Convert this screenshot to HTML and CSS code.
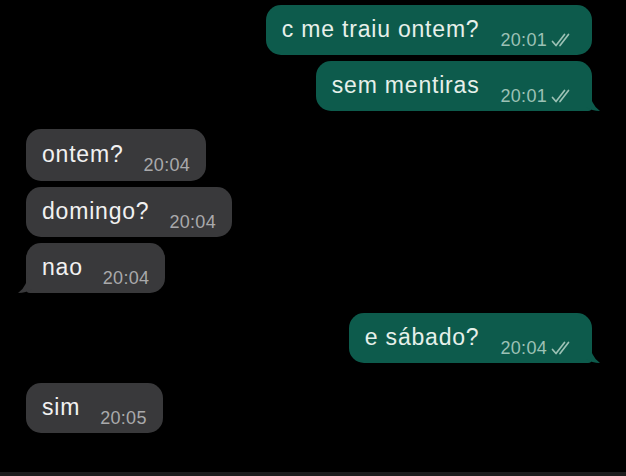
FILE: index.html
```html
<!DOCTYPE html>
<html lang="pt">
<head>
<meta charset="utf-8">
<title>conversa</title>
<link rel="stylesheet" href="styles.css">
</head>
<body>
<div class="chat">
	<div class="row out first">
		<div class="bubble green">
			<span class="text">c me traiu ontem?</span>
			<span class="time">20:01 <svg class="checks" viewBox="0 0 22 14"><path d="M1.5 8.5 L5 12.5 L13.5 1.5"/><path d="M9 12.5 L17.5 1.5"/></svg></span>
		</div>
	</div>
	<div class="row out">
		<div class="bubble green tail-right">
			<span class="text">sem mentiras</span>
			<span class="time">20:01 <svg class="checks" viewBox="0 0 22 14"><path d="M1.5 8.5 L5 12.5 L13.5 1.5"/><path d="M9 12.5 L17.5 1.5"/></svg></span>
			<svg class="tail tr" viewBox="0 0 16 22"><path d="M0 0 L4 0 Q4 14 14 21 Q6 21 0 17 Z"/></svg>
		</div>
	</div>
	<div class="row in gap-big">
		<div class="bubble gray tall">
			<span class="text">ontem?</span>
			<span class="time">20:04</span>
		</div>
	</div>
	<div class="row in">
		<div class="bubble gray">
			<span class="text">domingo?</span>
			<span class="time">20:04</span>
		</div>
	</div>
	<div class="row in">
		<div class="bubble gray tail-left">
			<span class="text">nao</span>
			<span class="time">20:04</span>
			<svg class="tail tl" viewBox="0 0 16 22"><path d="M16 0 L12 0 Q12 14 2 21 Q10 21 16 17 Z"/></svg>
		</div>
	</div>
	<div class="row out gap-big2">
		<div class="bubble green tail-right">
			<span class="text">e sábado?</span>
			<span class="time">20:04 <svg class="checks" viewBox="0 0 22 14"><path d="M1.5 8.5 L5 12.5 L13.5 1.5"/><path d="M9 12.5 L17.5 1.5"/></svg></span>
			<svg class="tail tr" viewBox="0 0 16 22"><path d="M0 0 L4 0 Q4 14 14 21 Q6 21 0 17 Z"/></svg>
		</div>
	</div>
	<div class="row in gap-big2">
		<div class="bubble gray">
			<span class="text">sim</span>
			<span class="time">20:05</span>
		</div>
	</div>
</div>
<div class="bottombar"></div>
</body>
</html>
```

FILE: styles.css
```css
html, body {
	margin: 0;
	padding: 0;
	background: #000;
	width: 626px;
	height: 476px;
	overflow: hidden;
	font-family: "Liberation Sans", Arial, sans-serif;
}
.chat {
	height: 472px;
	display: flex;
	flex-direction: column;
	padding-top: 5px;
	box-sizing: border-box;
}
.row {
	display: flex;
	margin-top: 6px;
}
.row.first { margin-top: 0; }
.row.out {
	justify-content: flex-end;
	padding-right: 34px;
}
.row.in {
	justify-content: flex-start;
	padding-left: 26px;
}
.row.gap-big { margin-top: 18px; }
.row.gap-big2 { margin-top: 20px; }

.bubble {
	position: relative;
	display: flex;
	align-items: flex-start;
	height: 50px;
	box-sizing: border-box;
	border-radius: 15px;
	padding: 11px 16px 0 16px;
}
.bubble.tall { height: 52px; padding-top: 12px; }
.green {
	background: #0d5b4c;
	color: #e6f0ea;
	padding-right: 19px;
}
.gray {
	background: #39393b;
	color: #f1f1f1;
}
.text {
	font-size: 23px;
	line-height: 27px;
	letter-spacing: 0.8px;
}
.time {
	display: flex;
	align-items: center;
	gap: 4px;
	margin-left: 20px;
	margin-top: 14px;
	font-size: 18px;
	line-height: 20px;
	letter-spacing: 0.3px;
}
.green .time { color: #9cc1b5; margin-left: 21px; }
.gray .time { color: #a9a9ab; }
.checks {
	width: 22px;
	height: 14px;
	fill: none;
	stroke: #9cc1b5;
	stroke-width: 1.7;
	stroke-linecap: round;
	stroke-linejoin: round;
}
.tail {
	position: absolute;
	width: 16px;
	height: 22px;
	bottom: -1px;
}
.tail.tr { right: -10px; fill: #0d5b4c; }
.tail.tl { left: -10px; fill: #39393b; }
.green.tail-right { border-bottom-right-radius: 4px; }
.gray.tail-left { border-bottom-left-radius: 4px; }

.bottombar {
	height: 4px;
	background: #1b1b1c;
}
```
